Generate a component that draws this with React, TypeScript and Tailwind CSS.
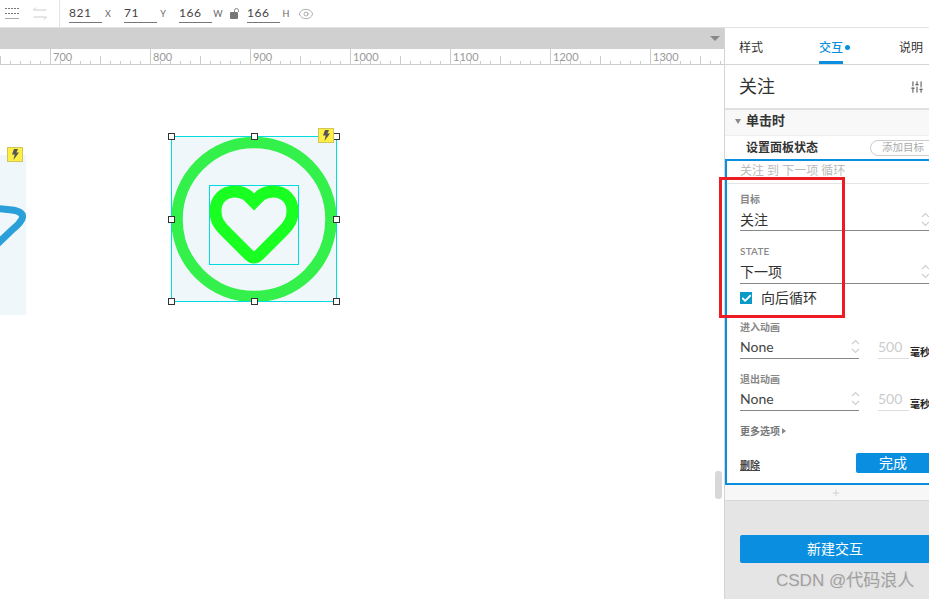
import { Check, Eye, Plus, SlidersVertical } from "lucide-react";

const cjk = "font-['Lato','Noto_Sans_CJK_SC',sans-serif]";

const fields = [
  { value: "821", unit: "X", gap: "mr-[11px]" },
  { value: "71", unit: "Y", gap: "mr-[11px]" },
  { value: "166", unit: "W", gap: "mr-[7px]" },
];

const handles = [
  "left-[-4px] top-[-4px]",
  "left-[79px] top-[-4px]",
  "right-[-4px] top-[-4px]",
  "left-[-4px] top-[79px]",
  "right-[-4px] top-[79px]",
  "left-[-4px] bottom-[-4px]",
  "left-[79px] bottom-[-4px]",
  "right-[-4px] bottom-[-4px]",
];

function Field({ value, unit, className }: { value: string; unit: string; className?: string }) {
  return (
    <div className={`flex items-center ${className ?? ""}`}>
      <span className="h-[19px] w-[33px] border-b border-[#777] text-[12px] leading-[18px] tracking-[0.6px] text-[#444]">{value}</span>
      <span className="ml-[1px] w-[10px] text-center text-[9px] text-[#666]">{unit}</span>
    </div>
  );
}

function Ruler() {
  const ticks = Array.from({ length: 73 }, (_, i) => i * 10);
  const labels = [700, 800, 900, 1000, 1100, 1200, 1300];
  return (
    <svg width="724" height="16" className="block">
      {ticks.map((x) => {
        const major = (x - 50) % 100 === 0;
        const mid = x % 100 === 0;
        return <line key={x} x1={x + 0.5} x2={x + 0.5} y1={major ? 0 : mid ? 7 : 12} y2="15" stroke="#ccc" />;
      })}
      {labels.map((label, i) => (
        <text key={label} x={53 + i * 100} y="12" fontSize="11" fontFamily="Lato, sans-serif" fill="#999">
          {label}
        </text>
      ))}
      <line x1="0" x2="724" y1="15.5" y2="15.5" stroke="#ccc" />
    </svg>
  );
}

function Bolt() {
  return (
    <span className="absolute flex h-[15px] w-[16px] items-center justify-center border border-[#cfc75a] bg-[#ffee44]">
      <svg width="8" height="11" viewBox="0 0 8 11">
        <path d="M3 0h4L5.4 3.6H8L2.4 11l1.3-5.4H1z" fill="#555" />
      </svg>
    </span>
  );
}

function Chevrons({ className }: { className?: string }) {
  return (
    <svg width="9" height="15" viewBox="0 0 9 15" fill="none" stroke="#cfcfcf" strokeWidth="1.2" className={className}>
      <path d="M1 5l3.500-3.500L8 5M1 10l3.500 3.500L8 10" />
    </svg>
  );
}

function Label({ children, className }: { children: React.ReactNode; className?: string }) {
  return <div className={`text-[10px] font-semibold leading-[14px] text-[#888] ${className ?? ""}`}>{children}</div>;
}

function Select({ value, className }: { value: string; className?: string }) {
  return (
    <div className={`flex h-[22px] w-[190px] items-center justify-between border-b border-[#888] text-[14px] leading-[20px] text-[#333] ${className ?? ""}`}>
      {value}
      <Chevrons />
    </div>
  );
}

function Animation({ label, className }: { label: string; className?: string }) {
  return (
    <div className={className}>
      <Label className="h-[14px]">{label}</Label>
      <div className="mt-[2px] flex items-start">
        <div className="flex h-[23px] w-[119px] items-center justify-between border-b border-[#888] pb-[2px] text-[14px] text-[#444]">
          None
          <Chevrons className="mr-[-1px]" />
        </div>
        <div className="ml-[19px] flex h-[23px] w-[31px] items-center border-b border-[#ddd] pb-[2px] text-[14px] text-[#ccc]">500</div>
        <span className="mt-[9px] ml-[1px] whitespace-nowrap text-[10px] font-bold leading-[14px] text-[#222]">毫秒</span>
      </div>
    </div>
  );
}

export default function App() {
  return (
    <div className={`relative flex h-[599px] w-[929px] flex-col overflow-hidden bg-white ${cjk}`}>
      <header className="flex h-[28px] shrink-0 items-center border-b border-[#e3e3e3]">
        <div className="flex h-[27px] w-[60px] shrink-0 items-center gap-[14px] border-r border-[#e3e3e3] pl-[5px]">
          <svg width="14" height="13" viewBox="0 0 14 13" stroke="#777">
            <path d="M0 1.500h14M0 6.500h14" strokeDasharray="2 1" />
            <path d="M0 11.500h14" stroke="#aaa" />
          </svg>
          <svg width="14" height="13" viewBox="0 0 14 13" fill="none" stroke="#ccc">
            <path d="M3 0.500L0.500 3h13M11 12.500l2.500-2.500H0.500" />
          </svg>
        </div>
        <div className="ml-[9px] flex items-center">
          {fields.map((f) => (
            <Field key={f.unit} value={f.value} unit={f.unit} className={f.gap} />
          ))}
          <svg width="10" height="11" viewBox="0 0 10 11" className="mr-[7px]">
            <rect x="0" y="4" width="8" height="7" rx="1" fill="#777" />
            <path d="M4.500 4.500V2.500a2 2 0 0 1 4 0V4" fill="none" stroke="#888" />
          </svg>
          <Field value="166" unit="H" className="mr-[7px]" />
          <Eye size={16} strokeWidth={1} className="text-[#888]" />
        </div>
      </header>

      <div className="flex min-h-0 flex-1">
        <main className="relative w-[724px] shrink-0 overflow-hidden">
          <div className="flex h-[21px] items-center justify-end bg-[#d0d0d0] pr-[4px]">
            <span className="h-0 w-0 border-x-[5px] border-t-[5px] border-x-transparent border-t-[#888]" />
          </div>
          <Ruler />

          {/* free canvas: offsets are the widget positions */}
          <div className="absolute left-0 top-[127px] h-[160px] w-[26px] bg-[#f0f7fa]">
            <svg width="26" height="160" fill="none" stroke="#2a9fd8" strokeWidth="7" strokeLinejoin="round" strokeLinecap="round">
              <path d="M-6 53l18 2c8 1 12 4 10 9c-2 4-5 7-9 10L-6 92" />
            </svg>
          </div>
          <div className="absolute left-[7px] top-[119px]">
            <Bolt />
          </div>

          <div className="absolute left-[171px] top-[108px] h-[166px] w-[166px] border border-[#00dbe0] bg-[#f0f7fa]">
            <svg width="164" height="164" fill="none" className="absolute inset-0">
              <circle cx="82" cy="82.500" r="77" stroke="#33f04a" strokeWidth="11.500" />
            </svg>
            <div className="absolute left-[37px] top-[48px] h-[80px] w-[90px] border border-[#00dbe0]">
              <svg width="88" height="78" fill="none" stroke="#1aff22" strokeWidth="12" className="absolute inset-0 overflow-visible">
                <path d="M44 16L37 9C33 6.500 29 5.500 25 5.500C13 5.500 5.500 14 5.500 25C5.500 34 9 39 15 45L39 69Q44 74 49 69L73 45C79 39 82.500 34 82.500 25C82.500 14 75 5.500 63 5.500C59 5.500 55 6.500 51 9Z" />
              </svg>
            </div>
            {handles.map((pos) => (
              <span key={pos} className={`absolute h-[7px] w-[7px] border border-[#333] bg-white ${pos}`} />
            ))}
            <div className="absolute left-[146px] top-[-9px]">
              <Bolt />
            </div>
          </div>

          <div className="absolute left-[715px] top-[443px] h-[28px] w-[7px] rounded-[3px] bg-[#d8d8d8]" />
        </main>

        <aside className="flex w-[205px] shrink-0 flex-col border-l border-[#d4d4d4] bg-[#e5e5e5]">
          <nav className="flex h-[37px] shrink-0 items-start border-b border-[#d4d4d4] bg-white text-[12px] text-[#333]">
            <span className="ml-[14px] mt-[12px] leading-[16px]">样式</span>
            <span className="ml-[56px] flex h-[36px] w-[24px] flex-col justify-between pt-[12px]">
              <span className="relative whitespace-nowrap font-medium leading-[16px] text-[#0a8fe0]">
                交互
                <span className="absolute left-[26px] top-[5px] h-[5px] w-[5px] rounded-full bg-[#0a8fe0]" />
              </span>
              <span className="h-[3px] bg-[#0a8fe0]" />
            </span>
            <span className="ml-[56px] mt-[12px] whitespace-nowrap leading-[16px]">说明</span>
          </nav>

          <div className="flex h-[43px] shrink-0 items-center justify-between bg-white pl-[14px] pr-[5px] text-[18px] text-[#333]">
            关注
            <SlidersVertical size={14} className="text-[#666]" />
          </div>
          <div className="flex h-[27px] shrink-0 items-center gap-[5px] border-t-2 border-[#e0e0e0] bg-[#f8f8f8] pb-[3px] pl-[10px] text-[13px] font-bold text-[#333]">
            <span className="h-0 w-0 border-x-[3.500px] border-t-[5px] border-x-transparent border-t-[#888]" />
            单击时
          </div>
          <div className="flex h-[24px] shrink-0 items-center border-t border-[#eee] bg-white pl-[21px] text-[12px] font-bold text-[#333]">
            <span className="whitespace-nowrap">设置面板状态</span>
            <span className="ml-[52px] flex h-[16px] w-[80px] shrink-0 items-center rounded-l-[8px] border border-[#ccc] pl-[11px] text-[10.500px] font-normal text-[#aaa]">添加目标</span>
          </div>

          <section className="h-[326px] w-[230px] shrink-0 border-2 border-[#0a8fe0] bg-white">
            <div className="flex h-[23px] items-center border-b border-[#e5e5e5] pb-[2px] pl-[13px] text-[12px] text-[#bbb]">关注 到 下一项 循环</div>
            <div className="pl-[13px]">
              <Label className="mt-[8px]">目标</Label>
              <div className="mt-[3px]">
                <Select value="关注" />
              </div>
              <Label className="mt-[13px] tracking-[0.2px]">STATE</Label>
              <div className="mt-[4px]">
                <Select value="下一项" className="pb-[2px]" />
              </div>
              <label className="mt-[8px] flex h-[12px] items-center text-[14px] text-[#333]">
                <span className="flex h-[12px] w-[12px] items-center justify-center bg-[#0a9ac8]">
                  <Check size={11} strokeWidth={4} className="text-white" />
                </span>
                <span className="ml-[9px] mb-[2px]">向后循环</span>
              </label>
              <Animation label="进入动画" className="mt-[16px]" />
              <Animation label="退出动画" className="mt-[13px]" />
              <div className="mt-[13px] flex items-center gap-[2px] text-[10px] font-semibold leading-[14px] text-[#777]">
                更多选项
                <span className="h-0 w-0 border-y-[3px] border-l-[4px] border-y-transparent border-l-[#888]" />
              </div>
              <div className="mt-[15px] flex items-end justify-between">
                <span className="pb-[1px] text-[10px] font-semibold leading-[14px] text-[#444] underline">删除</span>
                <button className="mr-[11px] h-[20px] w-[86px] rounded-[2px] bg-[#0a8fe0] pr-[12px] text-[14px] leading-[20px] text-white">完成</button>
              </div>
            </div>
          </section>

          <div className="flex h-[16px] shrink-0 items-center justify-center border-b border-[#d8d8d8] bg-[#f7f7f7] pl-[18px]">
            <Plus size={10} strokeWidth={2} className="text-[#ccc]" />
          </div>

          <div className="flex flex-1 flex-col pl-[15px] pt-[34px]">
            <button className="h-[28px] w-[190px] shrink-0 rounded-[2px] bg-[#0a8fe0] pb-[2px] text-[14px] text-white">新建交互</button>
          </div>
        </aside>
      </div>

      <span className="absolute bottom-[7px] left-[776px] whitespace-nowrap font-['Liberation_Sans','Noto_Sans_CJK_SC',sans-serif] text-[17px] leading-[22px] text-[#a0a0a0] [text-shadow:1px_1px_1px_#ddd]">
        CSDN @代码浪人
      </span>
      {/* annotation drawn on top of the screenshot */}
      <div className="absolute left-[719px] top-[177px] h-[141px] w-[126px] border-[3px] border-[#ed1c24]" />
    </div>
  );
}
